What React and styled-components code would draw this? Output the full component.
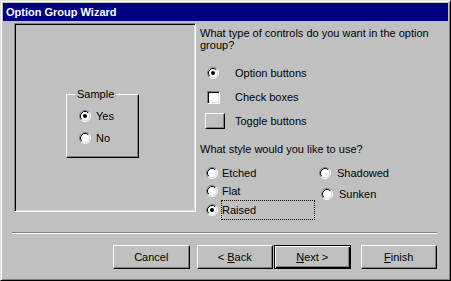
import React from "react";
import styled, { createGlobalStyle } from "styled-components";

const Global = createGlobalStyle`
  html, body {
    margin: 0;
    background: #c0c0c0;
  }
`;

const Window = styled.div`
  width: 451px;
  height: 281px;
  box-sizing: border-box;
  display: flex;
  flex-direction: column;
  padding: 2px;
  background: #c0c0c0;
  border: 1px solid;
  border-color: #dfdfdf #000 #000 #dfdfdf;
  box-shadow: inset 1px 1px #fff, inset -1px -1px #808080;
  font-family: "Liberation Sans", Arial, sans-serif;
  font-size: 11px;
  color: #000;
`;

const TitleBar = styled.div`
  height: 18px;
  flex-shrink: 0;
  display: flex;
  align-items: center;
  padding-left: 3px;
  background: #000080;
  color: #fff;
  font-weight: bold;
`;

const Body = styled.div`
  display: flex;
  flex-direction: column;
  padding: 2px 11px 0;
`;

const ContentRow = styled.div`
  display: flex;
  align-items: flex-start;
`;

/* sunken preview well on the left */
const Preview = styled.div`
  width: 182px;
  height: 189px;
  box-sizing: border-box;
  flex-shrink: 0;
  padding: 64px 0 0 51px;
  border: 1px solid;
  border-color: #808080 #fff #fff #808080;
  box-shadow: inset 1px 1px #000, inset -1px -1px #dfdfdf;
`;

const SampleGroup = styled.fieldset`
  width: 73px;
  box-sizing: border-box;
  margin: 0;
  padding: 0 0 8px;
  border: 1px solid;
  border-color: #fff #000 #000 #fff;
  box-shadow: inset -1px -1px #808080;
`;

const SampleLegend = styled.legend`
  margin-left: 8px;
  padding: 0 2px;
  line-height: 13px;
`;

const SampleList = styled.div`
  display: flex;
  flex-direction: column;
  padding: 4px 0 0 12px;
`;

const SampleRow = styled.div`
  height: 22px;
  display: flex;
  align-items: center;
  gap: 5px;
`;

const Column = styled.div`
  width: 240px;
  margin-left: 4px;
  padding-top: 4px;
  display: flex;
  flex-direction: column;
`;

const Prompt = styled.p`
  margin: ${(p) => p.$top || 0}px 0 0;
  line-height: 12px;
`;

const ControlList = styled.div`
  margin-top: 10px;
  padding-left: 5px;
  display: flex;
  flex-direction: column;
`;

const ControlRow = styled.div`
  height: 24px;
  display: flex;
  align-items: center;
`;

const IndicatorCell = styled.div`
  width: 20px;
  box-sizing: border-box;
  padding-left: ${(p) => p.$inset || 0}px;
  display: flex;
  align-items: center;
`;

const ControlLabel = styled.span`
  margin-left: 10px;
`;

const CheckBox = styled.span`
  width: 13px;
  height: 13px;
  box-sizing: border-box;
  background: #fff;
  border: 1px solid;
  border-color: #808080 #fff #fff #808080;
  box-shadow: inset 1px 1px #000, inset -1px -1px #dfdfdf;
`;

const ToggleFace = styled.span`
  width: 20px;
  height: 16px;
  box-sizing: border-box;
  background: #c0c0c0;
  border: 1px solid;
  border-color: #fff #000 #000 #fff;
  box-shadow: inset -1px -1px #808080;
`;

const StyleGrid = styled.div`
  margin-top: 9px;
  display: flex;
`;

const StyleColumn = styled.div`
  width: ${(p) => p.$width}px;
  padding-left: ${(p) => p.$pad || 0}px;
  box-sizing: border-box;
  display: flex;
  flex-direction: column;
`;

const StyleItem = styled.div`
  height: ${(p) => p.$h || 18}px;
  margin-top: ${(p) => p.$top || 0}px;
  padding-left: ${(p) => p.$nudge || 0}px;
  display: flex;
  align-items: center;
`;

const StyleLabel = styled.span`
  margin-left: ${(p) => p.$gap}px;
  border: 1px dotted ${(p) => (p.$focused ? "#000" : "transparent")};
  width: ${(p) => (p.$width ? `${p.$width}px` : "auto")};
  box-sizing: border-box;
  line-height: ${(p) => (p.$focused ? 18 : 14)}px;
`;

const Separator = styled.div`
  width: 425px;
  margin: 12px 0 0 -2px;
  border-top: 1px solid #808080;
  border-bottom: 1px solid #fff;
`;

const ButtonRow = styled.div`
  margin-top: 11px;
  padding-left: 99px;
  display: flex;
`;

const Button = styled.button`
  width: 77px;
  height: 24px;
  margin: 0 0 0 ${(p) => p.$gap || 0}px;
  padding: 0;
  background: #c0c0c0;
  font: inherit;
  color: #000;
  border: 1px solid;
  border-color: ${(p) => (p.$default ? "#000" : "#fff #000 #000 #fff")};
  box-shadow: ${(p) =>
    p.$default
      ? "inset 1px 1px #fff, inset -1px -1px #000, inset -2px -2px #808080"
      : "inset -1px -1px #808080"};
`;

function Radio({ checked }) {
  return (
    <svg width="12" height="12" viewBox="0 0 12 12" style={{ flexShrink: 0 }}>
      <circle cx="6" cy="6" r="4.5" fill="#fff" />
      <path d="M2.11 9.89 A5.5 5.5 0 0 1 9.89 2.11" fill="none" stroke="#808080" />
      <path d="M9.89 2.11 A5.5 5.5 0 0 1 2.11 9.89" fill="none" stroke="#fff" />
      <path d="M2.82 9.18 A4.5 4.5 0 0 1 9.18 2.82" fill="none" stroke="#000" />
      <path d="M9.18 2.82 A4.5 4.5 0 0 1 2.82 9.18" fill="none" stroke="#dfdfdf" />
      {checked && <circle cx="6" cy="6" r="2" fill="#000" />}
    </svg>
  );
}

export default function App() {
  return (
    <>
      <Global />
      <Window>
        <TitleBar>Option Group Wizard</TitleBar>
        <Body>
          <ContentRow>
            <Preview>
              <SampleGroup>
                <SampleLegend>Sample</SampleLegend>
                <SampleList>
                  <SampleRow>
                    <Radio checked />
                    <span>Yes</span>
                  </SampleRow>
                  <SampleRow>
                    <Radio />
                    <span>No</span>
                  </SampleRow>
                </SampleList>
              </SampleGroup>
            </Preview>

            <Column>
              <Prompt>What type of controls do you want in the option group?</Prompt>
              <ControlList>
                <ControlRow>
                  <IndicatorCell $inset={2}>
                    <Radio checked />
                  </IndicatorCell>
                  <ControlLabel>Option buttons</ControlLabel>
                </ControlRow>
                <ControlRow>
                  <IndicatorCell $inset={2}>
                    <CheckBox />
                  </IndicatorCell>
                  <ControlLabel>Check boxes</ControlLabel>
                </ControlRow>
                <ControlRow>
                  <IndicatorCell>
                    <ToggleFace />
                  </IndicatorCell>
                  <ControlLabel>Toggle buttons</ControlLabel>
                </ControlRow>
              </ControlList>

              <Prompt $top={10}>What style would you like to use?</Prompt>
              <StyleGrid>
                <StyleColumn $width={119} $pad={6}>
                  <StyleItem>
                    <Radio />
                    <StyleLabel $gap={3}>Etched</StyleLabel>
                  </StyleItem>
                  <StyleItem>
                    <Radio />
                    <StyleLabel $gap={3}>Flat</StyleLabel>
                  </StyleItem>
                  <StyleItem $h={20}>
                    <Radio checked />
                    <StyleLabel $gap={3} $focused $width={94}>
                      Raised
                    </StyleLabel>
                  </StyleItem>
                </StyleColumn>
                <StyleColumn $width={121}>
                  <StyleItem>
                    <Radio />
                    <StyleLabel $gap={5}>Shadowed</StyleLabel>
                  </StyleItem>
                  <StyleItem $top={3} $nudge={2}>
                    <Radio />
                    <StyleLabel $gap={5}>Sunken</StyleLabel>
                  </StyleItem>
                </StyleColumn>
              </StyleGrid>
            </Column>
          </ContentRow>

          <Separator />

          <ButtonRow>
            <Button>Cancel</Button>
            <Button $gap={7}>
              &lt; <u>B</u>ack
            </Button>
            <Button $gap={1} $default>
              <u>N</u>ext &gt;
            </Button>
            <Button $gap={10}>
              <u>F</u>inish
            </Button>
          </ButtonRow>
        </Body>
      </Window>
    </>
  );
}
